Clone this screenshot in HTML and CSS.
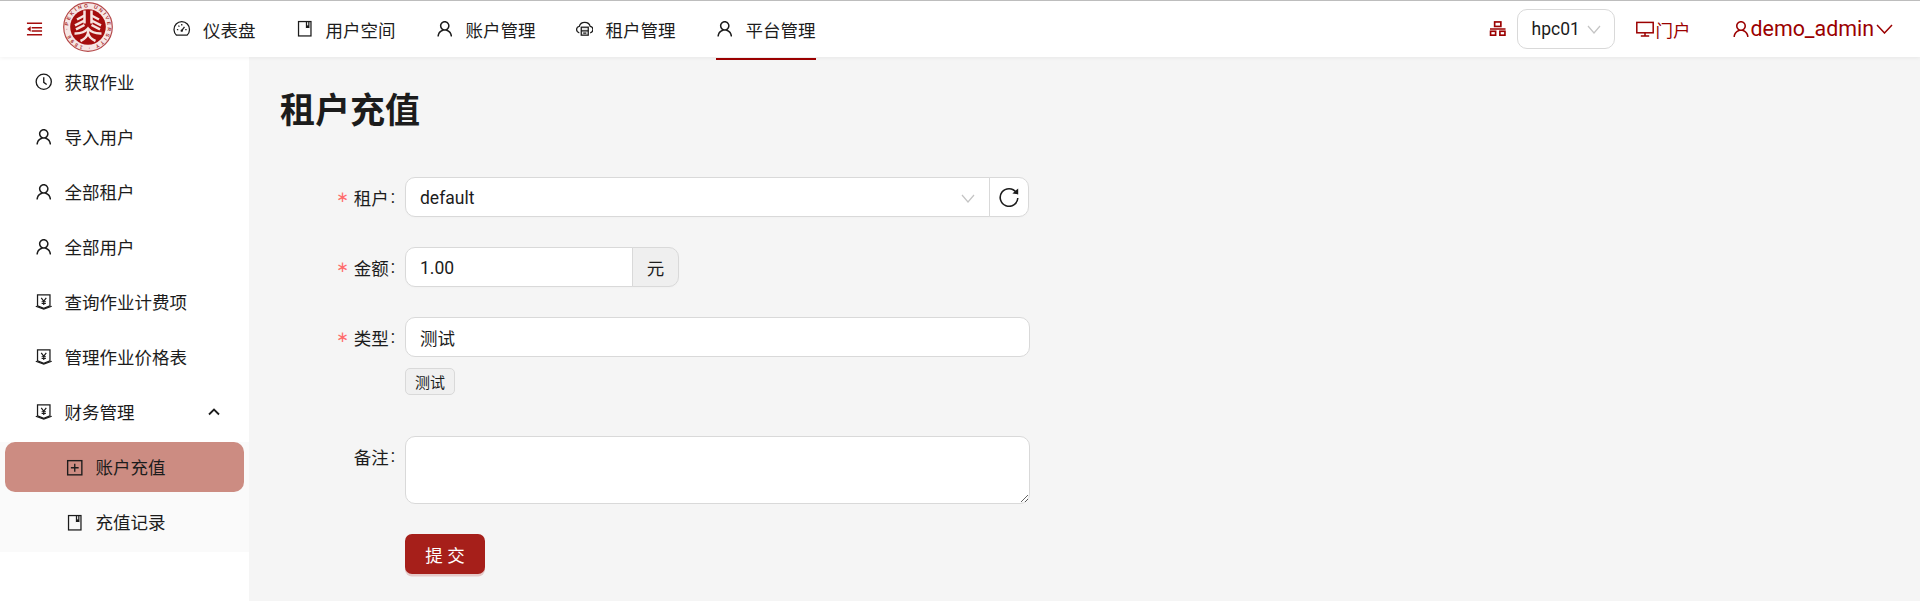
FILE: index.html
```html
<!DOCTYPE html>
<html lang="zh-CN">
<head>
<meta charset="utf-8">
<title>租户充值</title>
<link rel="stylesheet" href="styles.css">
</head>
<body>
<svg class="defs" width="0" height="0" aria-hidden="true">
  <symbol id="i-user" viewBox="64 64 896 896"><path fill="currentColor" d="M858.5 763.6a374 374 0 00-80.6-119.5 375.63 375.63 0 00-119.5-80.6c-.4-.2-.8-.3-1.2-.5C719.5 518 760 444.7 760 362c0-137-111-248-248-248S264 225 264 362c0 82.7 40.5 156 102.8 201.1-.4.2-.8.3-1.2.5-44.8 18.9-85 46-119.5 80.6a375.63 375.63 0 00-80.6 119.5A371.7 371.7 0 00136 901.8a8 8 0 008 8.2h60c4.4 0 7.9-3.5 8-7.8 2-77.2 33-149.5 87.8-204.3 56.7-56.7 132-87.9 212.2-87.9s155.5 31.2 212.2 87.9C779 752.7 810 825 812 902.2c.1 4.4 3.6 7.8 8 7.8h60a8 8 0 008-8.2c-1-47.8-10.9-94.3-29.5-138.2zM512 534c-45.9 0-89.1-17.9-121.6-50.4S340 407.9 340 362c0-45.9 17.9-89.1 50.4-121.6S466.1 190 512 190s89.1 17.9 121.6 50.4S684 316.1 684 362c0 45.9-17.9 89.1-50.4 121.6S557.9 534 512 534z"/></symbol>
  <symbol id="i-dash" viewBox="0 0 18 18"><g fill="none" stroke="currentColor" stroke-width="1.3"><path d="M3.6 15.6h10.8A8 8 0 1 0 3.6 15.6z"/><path d="M9 11l2.800-4"/><path d="M4 9.800h1.400M12.600 9.800H14M5.600 5.800l1 1M9 4.200v1.400"/></g><circle cx="9" cy="11" r="1.200" fill="currentColor"/></symbol>
  <symbol id="i-book" viewBox="0 0 18 18"><g fill="none" stroke="currentColor" stroke-width="1.300"><rect x="2.600" y="1.600" width="12.800" height="14.800"/><path d="M10.800 1.600v5.600l1.200-.9 1.200.9V1.600"/></g></symbol>
  <symbol id="i-cloud" viewBox="0 0 18 18"><g fill="none" stroke="currentColor" stroke-width="1.300"><path d="M3.400 13.200C1.600 12.800.6 11.400.6 9.800c0-1.700 1.200-3.100 2.800-3.300C4.100 3.800 6.400 2.400 9 2.400s4.900 1.400 5.600 4.100c1.600.2 2.800 1.600 2.800 3.300 0 1.600-1 3-2.800 3.400"/><rect x="5.400" y="7.400" width="7.200" height="8.200" fill="#e8e8e8"/><path d="M5.400 11.200h7.200M7.400 13.400h3.200"/></g></symbol>
  <symbol id="i-clock" viewBox="0 0 18 18"><g fill="none" stroke="currentColor" stroke-width="1.400"><circle cx="9" cy="9" r="7.800"/><path d="M9 4.400V9.600l3 2.200"/></g></symbol>
  <symbol id="i-money" viewBox="0 0 18 18"><g fill="none" stroke="currentColor" stroke-width="1.300"><path d="M2.600 2h12.800v11.200L9 15.800 2.600 13.200z"/><path d="M.8 13.600L9 16.600l8.200-3"/><path d="M6.400 5l2.600 3.400L11.600 5M9 8.400V12.400M6.800 9h4.400M6.800 10.800h4.400" stroke-width="1.200"/></g></symbol>
  <symbol id="i-plus" viewBox="0 0 18 18"><g fill="none" stroke="currentColor" stroke-width="1.400"><rect x="1.700" y="1.700" width="14.600" height="14.600"/><path d="M5 9h8M9 5v8"/></g></symbol>
  <symbol id="i-reload" viewBox="0 0 20 20"><path fill="none" stroke="currentColor" stroke-width="1.600" d="M17.200 5.400A8.800 8.800 0 1 0 18.800 11"/><path fill="currentColor" d="M19.200 1.400v6l-5.800-1z"/></symbol>
  <symbol id="i-desktop" viewBox="0 0 18 18"><g fill="none" stroke="currentColor" stroke-width="1.500"><rect x=".8" y="2.400" width="16.400" height="10.400"/><path d="M9 12.800v3M4.800 16h8.400"/></g></symbol>
  <symbol id="i-cluster" viewBox="0 0 18 18"><g fill="none" stroke="currentColor" stroke-width="1.700"><rect x="5.800" y="2" width="6.400" height="4.600"/><rect x="1.600" y="11.600" width="5.200" height="4"/><rect x="11.200" y="11.600" width="5.200" height="4"/></g><path fill="currentColor" d="M1 8.600h16v1.500H1z"/></symbol>
  <symbol id="i-menu" viewBox="0 0 18 16"><path fill="currentColor" d="M1 1h16v1.600H1zM6 6h11v1.600H6zM6 9.400h11v1.600H6zM1 13.400h16V15H1zM5 5.200v5.600L1 8z"/></symbol>
</svg>

<header class="topbar">
  <button class="menu-btn" type="button"><svg class="ic-menu"><use href="#i-menu"/></svg></button>
  <svg class="logo" viewBox="0 0 50 50" role="img" aria-label="北京大学校徽">
    <defs><path id="ring" d="M25 25m-19.600 0a19.600 19.600 0 1 1 39.200 0a19.600 19.600 0 1 1-39.200 0"/></defs>
    <circle cx="25" cy="25" r="24.300" fill="#f6e6e4" stroke="#b5494a" stroke-width="1.200"/>
    <text class="logo-text"><textPath href="#ring" startOffset="1%" textLength="120">PEKING UNIVERSITY · 1898 ·</textPath></text>
    <circle cx="25" cy="25" r="17.800" fill="#a50d0d"/>
    <g fill="none" stroke="#f7e4e0" stroke-width="2.500">
      <path d="M21.500 8.500v13M28.500 8.500v13"/>
      <path d="M21.500 13.500l-7.500 4M21.500 18.500l-9.500 4.800M21.500 23l-8.500 4.400"/>
      <path d="M28.500 13.500l7.500 4M28.500 18.500l9.500 4.800M28.500 23l8.500 4.400"/>
      <path d="M11.500 31.500c6 .3 10.500-1.600 13.500-5 3 3.400 7.500 5.300 13.500 5"/>
      <path d="M25 27v4c-1 4-4 6.500-7.500 8M25 31c1 4 4 6.500 7.500 8"/>
    </g>
  </svg>
  <nav class="nav">
    <a class="nav-item"><svg class="ic"><use href="#i-dash"/></svg>仪表盘</a>
    <a class="nav-item"><svg class="ic"><use href="#i-book"/></svg>用户空间</a>
    <a class="nav-item"><svg class="ic"><use href="#i-user"/></svg>账户管理</a>
    <a class="nav-item"><svg class="ic"><use href="#i-cloud"/></svg>租户管理</a>
    <a class="nav-item is-active"><svg class="ic"><use href="#i-user"/></svg>平台管理</a>
  </nav>
  <div class="tools">
    <svg class="ic tool-ic"><use href="#i-cluster"/></svg>
    <div class="cluster-select">hpc01<svg class="chev" viewBox="0 0 14 9"><path d="M1 1l6 7 6-7"/></svg></div>
    <a class="portal"><svg class="ic-portal"><use href="#i-desktop"/></svg>门户</a>
    <a class="account"><svg class="ic-portal"><use href="#i-user"/></svg><span class="account-name">demo_admin</span><svg class="chev-user" viewBox="0 0 17 10"><path d="M1 1l7.500 8L16 1"/></svg></a>
  </div>
</header>

<div class="body">
  <aside class="side">
    <a class="side-item"><svg class="ic"><use href="#i-clock"/></svg>获取作业</a>
    <a class="side-item"><svg class="ic"><use href="#i-user"/></svg>导入用户</a>
    <a class="side-item"><svg class="ic"><use href="#i-user"/></svg>全部租户</a>
    <a class="side-item"><svg class="ic"><use href="#i-user"/></svg>全部用户</a>
    <a class="side-item"><svg class="ic"><use href="#i-money"/></svg>查询作业计费项</a>
    <a class="side-item"><svg class="ic"><use href="#i-money"/></svg>管理作业价格表</a>
    <a class="side-item"><svg class="ic"><use href="#i-money"/></svg>财务管理<svg class="chev-up" viewBox="0 0 12 8"><path d="M1 6.500l5-5 5 5"/></svg></a>
    <div class="sub">
      <a class="sub-item is-active"><svg class="ic"><use href="#i-plus"/></svg>账户充值</a>
      <a class="sub-item"><svg class="ic"><use href="#i-book"/></svg>充值记录</a>
    </div>
  </aside>

  <main class="main">
    <h1 class="title">租户充值</h1>
    <form class="form">
      <div class="row">
        <label class="label req">租户<span class="colon">:</span></label>
        <div class="control group">
          <div class="select">default<svg class="chev" viewBox="0 0 14 9"><path d="M1 1l6 7 6-7"/></svg></div>
          <button class="reload" type="button"><svg class="ic-reload"><use href="#i-reload"/></svg></button>
        </div>
      </div>
      <div class="row">
        <label class="label req">金额<span class="colon">:</span></label>
        <div class="control group amount">
          <input class="input input-joined" value="1.00">
          <span class="addon">元</span>
        </div>
      </div>
      <div class="row row-tight">
        <label class="label req">类型<span class="colon">:</span></label>
        <div class="control wide"><input class="input" value="测试"></div>
      </div>
      <div class="row row-tag">
        <span class="label"></span>
        <div class="control"><span class="tag">测试</span></div>
      </div>
      <div class="row">
        <label class="label">备注<span class="colon">:</span></label>
        <div class="control wide"><textarea class="textarea"></textarea></div>
      </div>
      <div class="row">
        <span class="label"></span>
        <div class="control"><button class="submit" type="button">提 交</button></div>
      </div>
    </form>
  </main>
</div>
</body>
</html>
```
FILE: styles.css
```css
* { box-sizing: border-box; }
html, body { height: 100%; }
body {
  margin: 0;
  font-family: Roboto, "Noto Sans CJK SC", sans-serif;
  font-size: 17.5px;
  color: #1c1c1c;
  background: #f5f5f5;
  overflow: hidden;
  display: flex;
  flex-direction: column;
}
.defs { position: absolute; }
a { color: inherit; text-decoration: none; }
button { font-family: inherit; }

.ic { width: 17.5px; height: 17.5px; flex: none; }

.topbar {
  flex: none;
  height: 57px;
  border-top: 1px solid #bdbdbd;
  background: #fff;
  display: flex;
  align-items: center;
  padding-left: 25.5px;
  padding-right: 27px;
  box-shadow: 0 1px 4px rgba(0, 0, 0, .06);
  position: relative;
  z-index: 2;
}
.menu-btn {
  width: 17px;
  height: 16px;
  padding: 0;
  border: 0;
  background: none;
  color: #a50d0d;
  display: flex;
}
.ic-menu { width: 17px; height: 16px; }
.logo { width: 50px; height: 50px; margin-left: 20.5px; flex: none; margin-bottom: 4px; }
.logo-text { font-size: 5px; font-weight: 700; fill: #a82a2a; font-family: "Liberation Sans", sans-serif; }

.nav { display: flex; gap: 40px; margin-left: 60px; height: 100%; }
.nav-item {
  display: flex;
  align-items: center;
  gap: 12.5px;
  height: 100%;
  position: relative;
}
.nav-item.is-active::after {
  content: "";
  position: absolute;
  left: 0;
  right: 0;
  bottom: -3px;
  height: 2px;
  background: #9b0000;
}

.tools { margin-left: auto; display: flex; align-items: center; color: #9b0000; }
.tool-ic { margin-right: 10px; }
.cluster-select {
  width: 98px;
  height: 40px;
  border: 1px solid #d9d9d9;
  border-radius: 10px;
  background: #fff;
  color: #1c1c1c;
  display: flex;
  align-items: center;
  padding: 0 13px 0 14px;
  justify-content: space-between;
}
.chev { width: 14px; height: 9px; fill: none; stroke: #c4c4c4; stroke-width: 1.200; flex: none; }
.portal { display: flex; align-items: center; margin-left: 21px; gap: 2px; }
.ic-portal { width: 18px; height: 18px; flex: none; }
.account { display: flex; align-items: center; margin-left: 41px; gap: 1px; }
.account-name { font-size: 21.4px; line-height: 30px; }
.chev-user { width: 17px; height: 10px; fill: none; stroke: #9b0000; stroke-width: 1.500; margin-left: 1px; }

.body { flex: 1; display: flex; min-height: 0; }
.side {
  flex: none;
  width: 249px;
  background: #fff;
  display: flex;
  flex-direction: column;
  gap: 5px;
}
.side-item {
  height: 50px;
  display: flex;
  align-items: center;
  gap: 12px;
  padding: 0 29px 2px 35px;
  flex: none;
}
.side-item .ic, .sub-item .ic { margin-top: 2px; }
.chev-up { width: 12px; height: 8px; margin-left: auto; margin-top: 2px; fill: none; stroke: #1c1c1c; stroke-width: 1.800; }
.sub {
  background: #fafafa;
  display: flex;
  flex-direction: column;
  gap: 5px;
  padding: 0 5px 5px;
}
.sub-item {
  height: 50px;
  display: flex;
  align-items: center;
  gap: 12px;
  padding: 0 0 1px 61px;
  border-radius: 10px;
}
.sub-item.is-active { background: #cc8c82; }

.main { flex: 1; padding: 34px 0 0 31px; min-width: 0; }
.title {
  margin: 0;
  font-size: 35px;
  font-weight: 700;
  line-height: 42px;
  color: #1c1c1c;
}
.form { margin-top: 44px; display: flex; flex-direction: column; gap: 30px; }
.row { display: flex; align-items: flex-start; }
.row-tight { margin-bottom: -19px; }
.row-tag { margin-bottom: 11px; }
.row-tag .label { height: auto; }
.label {
  flex: none;
  width: 125px;
  height: 40px;
  display: flex;
  align-items: center;
  justify-content: flex-end;
  padding-right: 8px;
}
.colon { margin-left: 2px; margin-right: 2px; }
.req::before {
  content: "\2217";
  color: #ff6b6b;
  margin-right: 5px;
  font-family: "DejaVu Sans", sans-serif;
  font-size: 15px;
}
.control { width: 624px; }
.wide { width: 625px; }
.group { display: flex; box-shadow: 0 1px 2px rgba(0, 0, 0, .02); border-radius: 10px; }
.select {
  flex: 1;
  height: 40px;
  background: #fff;
  border: 1px solid #d9d9d9;
  border-radius: 10px 0 0 10px;
  display: flex;
  align-items: center;
  justify-content: space-between;
  padding: 2px 14px 0;
}
.reload {
  width: 40px;
  height: 40px;
  padding: 0;
  margin-left: -1px;
  background: #fff;
  border: 1px solid #d9d9d9;
  border-radius: 0 10px 10px 0;
  color: #1c1c1c;
  display: flex;
  align-items: center;
  justify-content: center;
}
.ic-reload { width: 20px; height: 20px; }
.amount { width: 274px; }
.input {
  width: 100%;
  height: 40px;
  display: block;
  border: 1px solid #d9d9d9;
  border-radius: 10px;
  background: #fff;
  padding: 0 14px;
  font: inherit;
  color: #1c1c1c;
  outline: 0;
}
.input-joined { flex: 1; min-width: 0; border-radius: 10px 0 0 10px; padding-top: 2px; }
.addon {
  flex: none;
  width: 47px;
  height: 40px;
  margin-left: -1px;
  display: flex;
  align-items: center;
  justify-content: center;
  background: #efefef;
  border: 1px solid #d9d9d9;
  border-radius: 0 10px 10px 0;
}
.tag {
  display: inline-flex;
  align-items: center;
  justify-content: center;
  width: 50px;
  height: 27px;
  background: #f0f0f0;
  border: 1px solid #d9d9d9;
  border-radius: 5px;
  font-size: 15px;
  vertical-align: top;
}
.textarea {
  display: block;
  width: 100%;
  height: 68px;
  border: 1px solid #d9d9d9;
  border-radius: 10px;
  background: #fff;
  padding: 5px 14px;
  font: inherit;
  outline: 0;
  resize: vertical;
}
.submit {
  width: 80px;
  height: 40px;
  border: 0;
  border-radius: 7px;
  background: #a61f1a;
  color: #fff;
  font-size: 17.5px;
  padding: 0;
  box-shadow: 0 2.500px 0 rgba(166, 31, 26, .2);
}
```
